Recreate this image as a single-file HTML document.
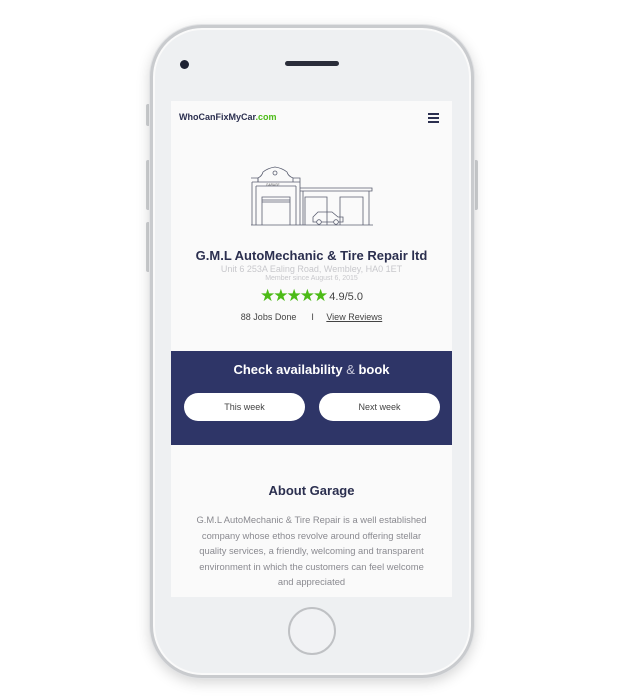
<!DOCTYPE html>
<html><head><meta charset="utf-8"><style>
*{margin:0;padding:0;box-sizing:border-box}
body{width:622px;height:700px;background:#fff;position:relative;overflow:hidden;font-family:"Liberation Sans",sans-serif}
.phone{position:absolute;left:150px;top:25px;width:324px;height:653px;border-radius:52px;background:#eef0f2;border:3px solid #c9cbce;box-shadow:0 0 0 1px #e2e3e5,0 4px 14px rgba(0,0,0,.18),inset 0 0 0 2px #fafafa}
.btn{position:absolute;background:#cfd1d4;border-radius:2px;width:4px}
.screen{position:absolute;left:171px;top:101px;width:281px;height:496px;background:#fafafa;overflow:hidden}
.cam{position:absolute;left:180px;top:60px;width:9px;height:9px;border-radius:50%;background:#1e2233}
.spk{position:absolute;left:285px;top:61px;width:54px;height:5px;border-radius:3px;background:#2a2d3a}
.home{position:absolute;left:288px;top:607px;width:48px;height:48px;border-radius:50%;border:2px solid #bfc1c4;background:#f1f2f4}
.c{position:absolute;left:0;width:281px;text-align:center}
</style></head><body>
<div class="btn" style="left:146px;top:104px;height:22px"></div>
<div class="btn" style="left:146px;top:160px;height:50px"></div>
<div class="btn" style="left:146px;top:222px;height:50px"></div>
<div class="btn" style="left:474px;top:160px;height:50px"></div>
<div class="phone"></div>
<div class="cam"></div><div class="spk"></div>
<div class="home"></div>
<div class="screen">
 <div style="position:absolute;left:8px;top:11px;font-size:9px;font-weight:bold;color:#2b2f4f">WhoCanFixMyCar<span style="color:#4cbb17">.com</span></div>
 <div style="position:absolute;left:257px;top:12px;width:11px;height:10px;border-top:2px solid #2b2f4f;border-bottom:2px solid #2b2f4f"><div style="margin-top:2px;height:2px;background:#2b2f4f"></div></div>
 <svg style="position:absolute;left:0;top:60px" width="281" height="70" viewBox="171 161 281 70" fill="none" stroke="#5a5e70" stroke-width="0.8">
  <path d="M251 225H373"/>
  <path d="M252 182V225M300 182V225M252 182H300M251 178H258V182M293 178H300V182"/>
  <path d="M258 182V178Q262 176 263 172Q268 168 275 167Q282 168 287 172Q288 176 293 178V182"/>
  <circle cx="275" cy="173" r="2"/>
  <text x="266" y="186" font-size="3.2" fill="#555" stroke="none" font-family="Liberation Sans">GARAGE</text>
  <path d="M256 186V225M296 186V225M256 186H296"/>
  <path d="M262 225V197H290V225M262 200H290M262 202H290"/>
  <path d="M300 188H372V191H300M303 191V225M369 191V225"/>
  <path d="M305 225V197H327V225M340 225V197H363V225"/>
  <path d="M313 222V217L318 212H332L338 217H343V222Z"/>
  <circle cx="319" cy="222" r="2.3" fill="#fafafa"/><circle cx="336" cy="222" r="2.3" fill="#fafafa"/>
 </svg>
 <div class="c" style="top:147px;font-size:13px;font-weight:bold;color:#2b2f4f">G.M.L AutoMechanic &amp; Tire Repair ltd</div>
 <div class="c" style="top:163px;font-size:9px;color:#c8c8cc">Unit 6 253A Ealing Road, Wembley, HA0 1ET</div>
 <div class="c" style="top:174px;font-size:7px;color:#c8c8cc">Member since August 6, 2015</div>
 <div class="c" style="top:185px;font-size:11px;color:#444"><span style="color:#4cbb17;font-size:17px;letter-spacing:-2px;vertical-align:-1px">★★★★★</span> 4.9/5.0</div>
 <div class="c" style="top:211px;font-size:9px;color:#444">88 Jobs Done &nbsp;&nbsp;&nbsp;&nbsp; I &nbsp;&nbsp;&nbsp;&nbsp;<span style="text-decoration:underline">View Reviews</span></div>
 <div style="position:absolute;left:0;top:250px;width:281px;height:94px;background:#2e3567">
  <div class="c" style="top:11px;font-size:13px;font-weight:bold;color:#fff">Check availability <span style="font-weight:normal;color:#ccd">&amp;</span> book</div>
  <div style="position:absolute;left:13px;top:42px;width:121px;height:28px;border-radius:14px;background:#fff;font-size:9px;color:#444;text-align:center;line-height:28px">This week</div>
  <div style="position:absolute;left:148px;top:42px;width:121px;height:28px;border-radius:14px;background:#fff;font-size:9px;color:#444;text-align:center;line-height:28px">Next week</div>
 </div>
 <div class="c" style="top:382px;font-size:13px;font-weight:bold;color:#2b2f4f">About Garage</div>
 <div class="c" style="top:411px;font-size:9.4px;line-height:15.5px;color:#8a8a90;padding:0 21px">G.M.L AutoMechanic &amp; Tire Repair is a well established company whose ethos revolve around offering stellar quality services, a friendly, welcoming and transparent environment in which the customers can feel welcome and appreciated</div>
</div>
</body></html>
